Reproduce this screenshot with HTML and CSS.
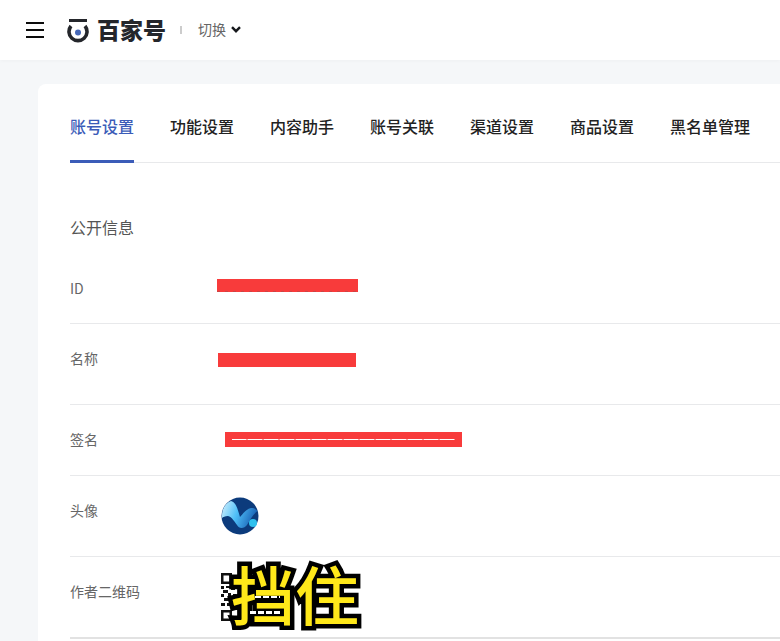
FILE: index.html
```html
<!DOCTYPE html>
<html lang="zh-CN">
<head>
    <meta charset="UTF-8">
    <meta name="viewport" content="width=device-width, initial-scale=1.0">
    <title>百家号 账号设置</title>
    <link rel="stylesheet" href="styles.css">
</head>
<body>
    <header class="topbar">
        <div class="menu-btn"><span></span><span></span><span></span></div>
        <svg class="logo-mark" width="22" height="24" viewBox="0 0 22 24">
            <rect x="2" y="0" width="18" height="3" fill="#24262b"/>
            <path d="M4 7 A9 9 0 1 0 18 7" fill="none" stroke="#24262b" stroke-width="3.6"/>
            <circle cx="11" cy="13.5" r="3" fill="#4668b8"/>
        </svg>
        <span class="logo-text">百家号</span>
        <span class="divider"></span>
        <span class="switch">切换</span>
        <svg class="chevron" width="10" height="7" viewBox="0 0 10 7">
            <path d="M1 1.200 L5 5.200 L9 1.200" fill="none" stroke="#16181c" stroke-width="2.400"/>
        </svg>
    </header>

    <main class="card">
        <nav class="tabs">
            <a class="tab active">账号设置</a>
            <a class="tab">功能设置</a>
            <a class="tab">内容助手</a>
            <a class="tab">账号关联</a>
            <a class="tab">渠道设置</a>
            <a class="tab">商品设置</a>
            <a class="tab">黑名单管理</a>
        </nav>

        <h2 class="section-title">公开信息</h2>

        <div class="row row-short row-id">
            <span class="label">ID</span>
            <span class="mask mask-id"></span>
        </div>
        <div class="row row-name">
            <span class="label">名称</span>
            <span class="mask mask-name"></span>
        </div>
        <div class="row row-short row-sign">
            <span class="label">签名</span>
            <span class="mask mask-sign"></span>
        </div>
        <div class="row row-avatar">
            <span class="label">头像</span>
            <svg class="avatar" width="40" height="40" viewBox="0 0 40 40">
                <defs>
                    <linearGradient id="vGrad" x1="0" y1="0" x2="1" y2="0.3">
                        <stop offset="0" stop-color="#d5f1fc"/>
                        <stop offset="0.5" stop-color="#4fc0f8"/>
                        <stop offset="1" stop-color="#1b66b8"/>
                    </linearGradient>
                </defs>
                <circle cx="20" cy="20" r="18.500" fill="#0c3b7c"/>
                <path d="M2 20 C2 12 6 7 11 5 C16 6 18 14 20 21 C23 18 26 13 31 12 C34 12 36 13 37.500 15 C33 18 30 24 27 29 C24 33 19 33 17 29 C14 25 12 21 8 20 C5 20 3 21 2 22 Z" fill="url(#vGrad)"/>
                <circle cx="33" cy="27" r="4" fill="#2ec0ee"/>
            </svg>
        </div>
        <div class="row row-qr">
            <span class="label">作者二维码</span>
            <svg class="qr" width="50" height="50" viewBox="0 0 50 50">
                <rect width="50" height="50" fill="#fff"/>
                <path d="M1 1h11v11H1z M3.500 3.500v6h6v-6z M1 38h11v11H1z M3.500 40.500v6h6v-6z" fill="#111" fill-rule="evenodd"/>
                <path d="M1 14h3v3H1z M6 14h4v2H6z M11 15h4v3h-4z M3 18h5v3H3z M1 22h3v3H1z M8 21h3v4H8z M13 22h3v3h-3z M4 26h5v3H4z M11 27h4v3h-4z M1 31h4v3H1z M7 31h3v3H7z M12 33h3v3h-3z" fill="#111"/>
            </svg>
            <span class="cover">挡住</span>
            <span class="bits bits-top"></span>
            <span class="bits bits-bottom"></span>
        </div>
    </main>
</body>
</html>
```

FILE: styles.css
```css
* {
    box-sizing: border-box;
}

html, body {
    height: 641px;
    overflow: hidden;
}

body {
    margin: 0;
    background-color: #f5f7f9;
    font-family: "Noto Sans CJK SC", "Liberation Sans", sans-serif;
    color: #333;
}

.topbar {
    display: flex;
    align-items: center;
    height: 60px;
    padding-left: 26px;
    background-color: #fff;
    box-shadow: 0 1px 4px rgba(0, 0, 0, 0.03);
}

.menu-btn {
    display: flex;
    flex-direction: column;
    gap: 5px;
    width: 18px;
    margin-right: 23px;
}

.menu-btn span {
    height: 2px;
    background-color: #0c0c0c;
}

.logo-mark {
    margin-right: 8px;
    margin-top: 1px;
}

.logo-text {
    width: 68px;
    margin-top: -2px;
    font-size: 23px;
    font-weight: 900;
    line-height: 28px;
    color: #24262b;
    white-space: nowrap;
}

.divider {
    width: 2px;
    height: 8px;
    margin-left: 15px;
    margin-right: 16px;
    background-color: #ccc;
}

.switch {
    margin-top: -2px;
    margin-right: 5px;
    font-size: 14px;
    color: #666;
}

.chevron {
    margin-top: -1px;
}

.card {
    margin: 24px 0 0 38px;
    height: 557px;
    padding: 0 0 0 32px;
    background-color: #fff;
    border-radius: 8px 0 0 0;
}

.tabs {
    display: flex;
    gap: 36px;
    height: 79px;
    border-bottom: 1px solid #e8e9eb;
}

.tab {
    height: 79px;
    padding-top: 29px;
    font-size: 16px;
    font-weight: 500;
    line-height: 26px;
    color: #222;
    white-space: nowrap;
}

.tab.active {
    color: #3b5cb8;
    border-bottom: 3px solid #3b5cb8;
}

.section-title {
    margin: 51px 0 0;
    font-size: 16px;
    font-weight: 400;
    line-height: 26px;
    color: #555;
}

.row {
    position: relative;
    display: flex;
    height: 81px;
    padding-top: 25px;
    border-bottom: 1px solid #e8e9eb;
}

.row-short {
    height: 71px;
}

.row-id {
    margin-top: 13px;
    padding-top: 26px;
}

.row-qr {
    height: 82px;
    border-bottom: 2px solid #e2e2e2;
}

.label {
    flex: none;
    width: 147px;
    font-size: 14px;
    line-height: 18px;
    color: #666;
}

.mask {
    display: block;
    background-color: #f83b3b;
}

.mask-id {
    width: 141px;
    height: 13px;
    background-image: repeating-linear-gradient(90deg, #c44 0 3px, #f83b3b 3px 8px);
    background-size: 100% 1px;
    background-position: 0 100%;
    background-repeat: no-repeat;
}

.mask-name {
    width: 138px;
    height: 14px;
    margin-top: 4px;
    margin-left: 1px;
}

.mask-sign {
    width: 237px;
    height: 15px;
    margin-top: 2px;
    margin-left: 8px;
    background-image: repeating-linear-gradient(90deg, #fff 0 14px, #f8a0a0 14px 16px);
    background-size: 223px 1px;
    background-position: 7px 7px;
    background-repeat: no-repeat;
}

.avatar {
    margin-top: -5px;
    margin-left: 3px;
}

.qr {
    margin-top: -10px;
    margin-left: 3px;
}

.cover {
    position: absolute;
    left: 161px;
    top: -5px;
    font-size: 64px;
    font-weight: 500;
    line-height: 80px;
    color: #ffe81a;
    -webkit-text-stroke: 9px #000;
    paint-order: stroke fill;
    text-shadow: 2px 2px 0 #000;
    white-space: nowrap;
}

.bits {
    position: absolute;
    height: 2px;
    background-image: repeating-linear-gradient(90deg, #fff 0 6px, transparent 6px 8px);
}

.bits-top {
    left: 185px;
    top: 39px;
    width: 25px;
}

.bits-bottom {
    left: 180px;
    top: 54px;
    width: 30px;
    height: 3px;
}
```
